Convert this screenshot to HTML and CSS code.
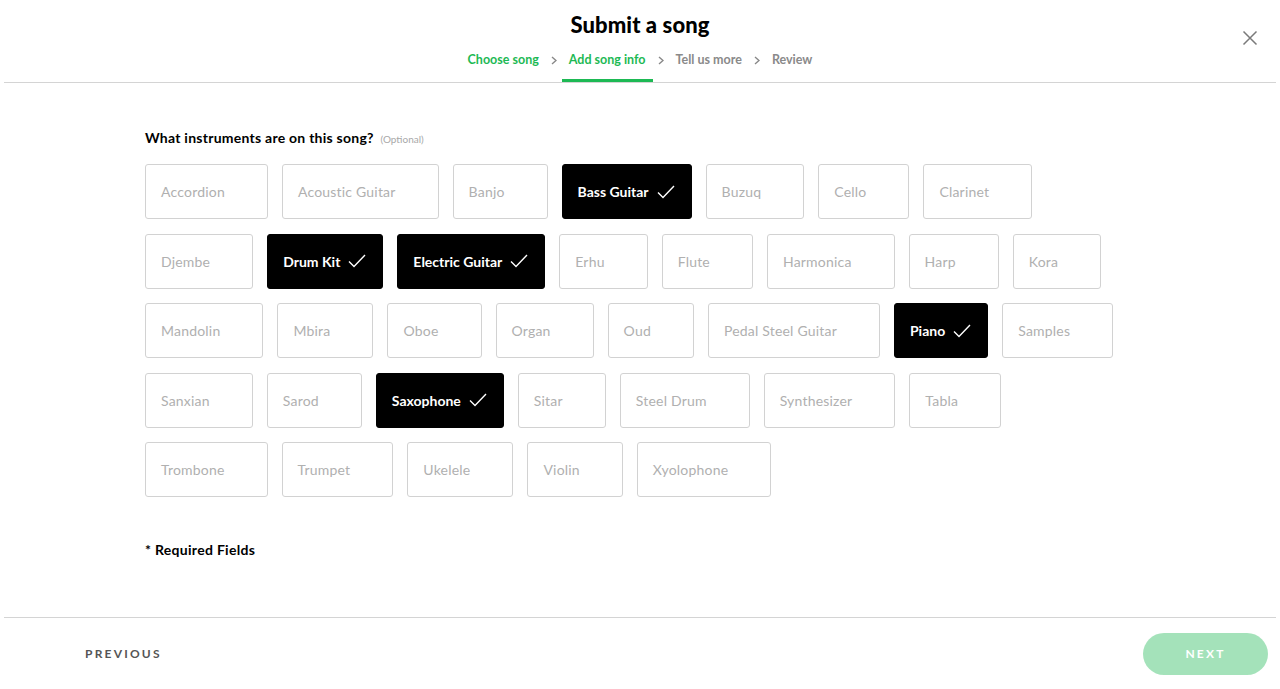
FILE: index.html
```html
<!DOCTYPE html>
<html lang="en">
<head>
    <meta charset="UTF-8">
    <meta name="viewport" content="width=device-width, initial-scale=1.0">
    <title>Submit a song</title>
    <link rel="stylesheet" href="styles.css">
</head>
<body>
    <div class="page">
        <header class="wizard-header">
            <h1 class="wizard-title">Submit a song</h1>
            <nav class="steps">
                <span class="step done">Choose song</span>
                <span class="step-sep"><svg width="6" height="9" viewBox="0 0 6 9"><polyline points="1,1 5,4.5 1,8" fill="none" stroke="#888" stroke-width="1.4"/></svg></span>
                <span class="step active">Add song info</span>
                <span class="step-sep"><svg width="6" height="9" viewBox="0 0 6 9"><polyline points="1,1 5,4.5 1,8" fill="none" stroke="#888" stroke-width="1.4"/></svg></span>
                <span class="step">Tell us more</span>
                <span class="step-sep"><svg width="6" height="9" viewBox="0 0 6 9"><polyline points="1,1 5,4.5 1,8" fill="none" stroke="#888" stroke-width="1.4"/></svg></span>
                <span class="step">Review</span>
            </nav>
            <button class="close-btn" aria-label="Close">
                <svg width="16" height="16" viewBox="0 0 16 16"><path d="M1.5 1.5 L14.5 14.5 M14.5 1.5 L1.5 14.5" stroke="#7a7a7a" stroke-width="1.5" fill="none"/></svg>
            </button>
        </header>

        <main class="wizard-body">
            <h2 class="field-label">What instruments are on this song? <span class="optional">(Optional)</span></h2>

            <div class="chips">
                <button class="chip">Accordion<span class="check"></span></button>
                <button class="chip">Acoustic Guitar<span class="check"></span></button>
                <button class="chip">Banjo<span class="check"></span></button>
                <button class="chip selected">Bass Guitar<span class="check"></span></button>
                <button class="chip">Buzuq<span class="check"></span></button>
                <button class="chip">Cello<span class="check"></span></button>
                <button class="chip">Clarinet<span class="check"></span></button>

                <button class="chip">Djembe<span class="check"></span></button>
                <button class="chip selected">Drum Kit<span class="check"></span></button>
                <button class="chip selected">Electric Guitar<span class="check"></span></button>
                <button class="chip">Erhu<span class="check"></span></button>
                <button class="chip">Flute<span class="check"></span></button>
                <button class="chip">Harmonica<span class="check"></span></button>
                <button class="chip">Harp<span class="check"></span></button>
                <button class="chip">Kora<span class="check"></span></button>

                <button class="chip">Mandolin<span class="check"></span></button>
                <button class="chip">Mbira<span class="check"></span></button>
                <button class="chip">Oboe<span class="check"></span></button>
                <button class="chip">Organ<span class="check"></span></button>
                <button class="chip">Oud<span class="check"></span></button>
                <button class="chip">Pedal Steel Guitar<span class="check"></span></button>
                <button class="chip selected">Piano<span class="check"></span></button>
                <button class="chip">Samples<span class="check"></span></button>

                <button class="chip">Sanxian<span class="check"></span></button>
                <button class="chip">Sarod<span class="check"></span></button>
                <button class="chip selected">Saxophone<span class="check"></span></button>
                <button class="chip">Sitar<span class="check"></span></button>
                <button class="chip">Steel Drum<span class="check"></span></button>
                <button class="chip">Synthesizer<span class="check"></span></button>
                <button class="chip">Tabla<span class="check"></span></button>

                <button class="chip">Trombone<span class="check"></span></button>
                <button class="chip">Trumpet<span class="check"></span></button>
                <button class="chip">Ukelele<span class="check"></span></button>
                <button class="chip">Violin<span class="check"></span></button>
                <button class="chip">Xyolophone<span class="check"></span></button>
            </div>

            <p class="required-note">* Required Fields</p>
        </main>

        <footer class="wizard-footer">
            <button class="btn-prev">PREVIOUS</button>
            <button class="btn-next">NEXT</button>
        </footer>
    </div>
</body>
</html>
```

FILE: styles.css
```css
* {
    margin: 0;
    padding: 0;
    box-sizing: border-box;
}

body {
    font-family: "Lato", "Liberation Sans", sans-serif;
    background: #ffffff;
    color: #000000;
}

button {
    font-family: inherit;
    background: none;
    border: none;
    cursor: pointer;
}

.page {
    height: 100vh;
    display: flex;
    flex-direction: column;
}

/* header */

.wizard-header {
    position: relative;
    margin: 0 4px;
    padding-top: 11px;
    border-bottom: 1px solid #d4d4d4;
    display: flex;
    flex-direction: column;
    align-items: center;
}

.wizard-title {
    font-size: 22px;
    line-height: 28px;
    font-weight: 900;
    letter-spacing: 0.1px;
    margin-bottom: 12px;
}

.steps {
    display: flex;
    align-items: flex-start;
}

.step {
    font-size: 12.5px;
    font-weight: 700;
    line-height: 18px;
    color: #8a8a8a;
    padding: 0 7px 10px;
    border-bottom: 3px solid transparent;
}

.step.done,
.step.active {
    color: #1db954;
}

.step.active {
    border-bottom-color: #1db954;
}

.step-sep {
    display: flex;
    align-items: center;
    height: 18px;
    margin: 0 5px;
}

.close-btn {
    position: absolute;
    top: 30px;
    right: 18px;
    width: 16px;
    height: 16px;
    display: flex;
}

/* body */

.wizard-body {
    flex: 1;
    padding: 46px 0 0 145px;
}

.field-label {
    font-size: 14px;
    line-height: 18px;
    font-weight: 700;
    letter-spacing: 0.25px;
    margin-bottom: 16px;
}

.optional {
    font-size: 10px;
    font-weight: 400;
    letter-spacing: 0;
    color: #a8a8a8;
    margin-left: 3px;
}

.chips {
    width: 975px;
    display: flex;
    flex-wrap: wrap;
    column-gap: 14px;
    row-gap: 14.5px;
}

.chip {
    height: 55px;
    display: flex;
    align-items: center;
    padding: 0 16px 0 15px;
    border: 1px solid #d2d2d2;
    border-radius: 3px;
    font-size: 14px;
    letter-spacing: 0.2px;
    color: #b0b0b0;
}

.check {
    width: 18px;
    height: 14px;
    margin-left: 8px;
}

.chip.selected {
    background: #000000;
    border-color: #000000;
    color: #ffffff;
    font-weight: 700;
    letter-spacing: 0;
}

.chip.selected .check {
    background: url("data:image/svg+xml;utf8,<svg xmlns='http://www.w3.org/2000/svg' width='18' height='14' viewBox='0 0 18 14'><polyline points='1,7.5 6,12.5 17,1' fill='none' stroke='white' stroke-width='1.4'/></svg>") no-repeat center;
}

.required-note {
    font-size: 14px;
    line-height: 18px;
    font-weight: 700;
    letter-spacing: 0.3px;
    margin-top: 44px;
}

/* footer */

.wizard-footer {
    height: 72px;
    margin: 0 4px;
    border-top: 1px solid #d4d4d4;
    display: flex;
    align-items: center;
    justify-content: space-between;
    padding: 0 8px 0 81px;
}

.btn-prev {
    font-size: 12px;
    font-weight: 700;
    letter-spacing: 2.2px;
    color: #555555;
}

.btn-next {
    width: 125px;
    height: 42px;
    border-radius: 21px;
    background: #1db954;
    opacity: 0.4;
    color: #ffffff;
    font-size: 12px;
    font-weight: 700;
    letter-spacing: 2.2px;
}
```
